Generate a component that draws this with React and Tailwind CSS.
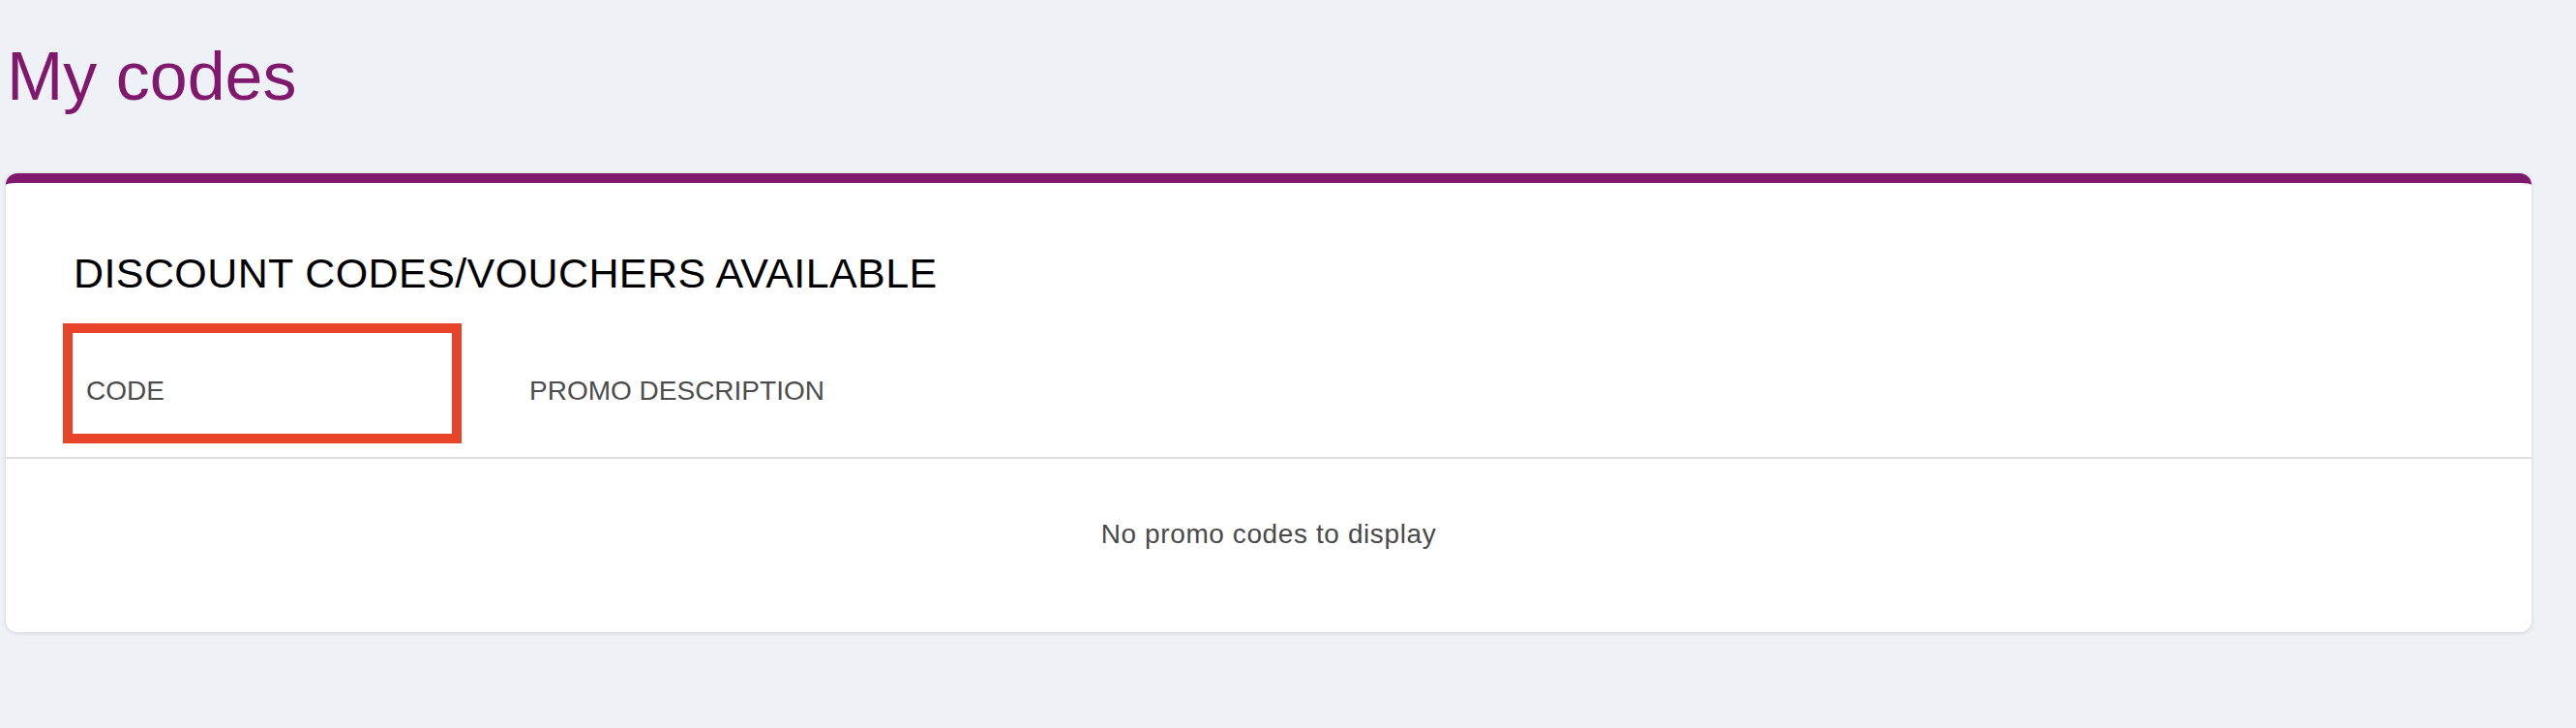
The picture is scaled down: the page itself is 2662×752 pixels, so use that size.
import React from 'react';

const font = { fontFamily: '"Liberation Sans", Arial, sans-serif' };

function PromoCodesCard() {
  return (
    <div className="relative mt-[65px] rounded-[12px] border-t-[10px] border-[#80186e] bg-white shadow-[0_1px_4px_rgba(0,0,0,0.14)]">
      <h2 className="pl-[70px] pt-[72px] text-[43px] leading-none font-normal tracking-[0.4px] text-black">
        DISCOUNT CODES/VOUCHERS AVAILABLE
      </h2>

      {/* table header */}
      <div className="mt-[32px] flex border-b-2 border-[#dedede] py-[54px] text-[28px] leading-none text-[#4d4d4d]">
        <div className="w-[541px] shrink-0 pl-[83px]">CODE</div>
        <div>PROMO DESCRIPTION</div>
      </div>

      {/* empty state */}
      <div className="pt-[64px] pb-[87px] text-center text-[28px] leading-none tracking-[0.6px] text-[#4a4a4a]">
        No promo codes to display
      </div>

      {/* hand drawn highlight over the CODE column */}
      <div className="pointer-events-none absolute left-[59px] top-[145px] h-[124px] w-[412px] border-[10px] border-[#e8442a]" />
    </div>
  );
}

export default function App() {
  return (
    <div className="min-h-screen bg-[#eef1f5] pl-[6px] pr-[46px] pt-[44px]" style={font}>
      <h1 className="ml-[1px] text-[70px] leading-none font-normal text-[#80186e]">My codes</h1>
      <PromoCodesCard />
    </div>
  );
}
